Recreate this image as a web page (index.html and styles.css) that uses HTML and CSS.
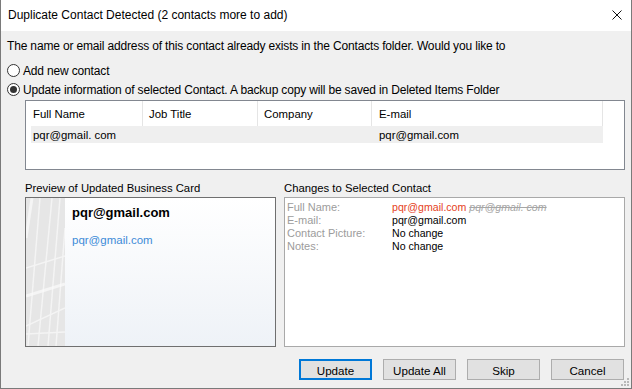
FILE: index.html
```html
<!DOCTYPE html>
<html>
<head>
<meta charset="utf-8">
<link rel="stylesheet" href="styles.css">
</head>
<body>
<div class="titlebar">
  <span class="title">Duplicate Contact Detected (2 contacts more to add)</span>
  <svg class="close" width="10" height="10" viewBox="0 0 10 10"><path d="M0.5 0.5 L9.5 9.5 M9.5 0.5 L0.5 9.5" stroke="#111" stroke-width="1" fill="none"/></svg>
</div>
<div class="content">
  <div class="desc">The name or email address of this contact already exists in the Contacts folder. Would you like to</div>
  <div class="radios">
    <div class="radio-row"><span class="radio"></span><span>Add new contact</span></div>
    <div class="radio-row"><span class="radio checked"></span><span>Update information of selected Contact. A backup copy will be saved in Deleted Items Folder</span></div>
  </div>
  <div class="listbox">
    <div class="lv-head">
      <div class="lv-col c1">Full Name</div>
      <div class="lv-col c2">Job Title</div>
      <div class="lv-col c3">Company</div>
      <div class="lv-col c4">E-mail</div>
    </div>
    <div class="lv-row">
      <div class="lv-cell first">pqr@gmail. com</div>
      <div class="lv-cell">pqr@gmail.com</div>
    </div>
  </div>
  <div class="lower">
    <div class="card-col">
      <div class="group-label">Preview of Updated Business Card</div>
      <div class="card">
        <div class="strip">
          <svg width="39" height="148" viewBox="0 0 39 148">
            <g stroke="#f6f6f6" stroke-width="1.5" fill="none" opacity="0.9">
              <path d="M14 0 L2 148"/>
              <path d="M26 0 L12 148"/>
              <path d="M34 0 L22 148"/>
              <path d="M39 30 L30 148"/>
              <path d="M0 70 L39 58"/>
              <path d="M0 128 L39 110"/>
              <path d="M0 136 L39 134"/>
            </g>
            <g stroke="#fbfbfb" stroke-width="3" fill="none" opacity="0.7">
              <path d="M0 98 L39 86"/>
              <path d="M6 0 L0 40"/>
            </g>
          </svg>
        </div>
        <div class="card-body">
          <div class="card-name">pqr@gmail.com</div>
          <div class="card-email">pqr@gmail.com</div>
        </div>
      </div>
    </div>
    <div class="changes-col">
      <div class="group-label">Changes to Selected Contact</div>
      <div class="changes">
        <div class="ch-label">Full Name:</div><div class="ch-value"><span class="new">pqr@gmail.com</span> <span class="old">pqr@gmail. com</span></div>
        <div class="ch-label">E-mail:</div><div class="ch-value">pqr@gmail.com</div>
        <div class="ch-label">Contact Picture:</div><div class="ch-value">No change</div>
        <div class="ch-label">Notes:</div><div class="ch-value">No change</div>
      </div>
    </div>
  </div>
  <div class="buttons">
    <button class="btn default">Update</button>
    <button class="btn">Update All</button>
    <button class="btn">Skip</button>
    <button class="btn">Cancel</button>
  </div>
</div>
<svg class="grip" width="10" height="10" viewBox="0 0 10 10">
  <g fill="#b8b8b8">
    <rect x="8" y="2" width="2" height="2"/>
    <rect x="5" y="5" width="2" height="2"/><rect x="8" y="5" width="2" height="2"/>
    <rect x="2" y="8" width="2" height="2"/><rect x="5" y="8" width="2" height="2"/><rect x="8" y="8" width="2" height="2"/>
  </g>
</svg>
</body>
</html>
```

FILE: styles.css
```css
html, body {
  margin: 0;
  padding: 0;
}
body {
  width: 632px;
  height: 389px;
  box-sizing: border-box;
  border: 1px solid #7a7a7a;
  border-top: none;
  display: flex;
  flex-direction: column;
  font-family: "Liberation Sans", Arial, sans-serif;
  font-size: 12px;
  color: #000;
  overflow: hidden;
  position: relative;
  background: #f0f0f0;
}
.titlebar {
  height: 31px;
  flex: none;
  background: #fff;
  display: flex;
  align-items: center;
  padding-left: 7px;
  padding-bottom: 1px;
  box-sizing: border-box;
}
.title {
  font-size: 12px;
}
.close {
  margin-left: auto;
  margin-right: 9px;
}
.content {
  flex: 1;
  display: flex;
  flex-direction: column;
  padding: 7px 6px 0 6px;
}
.desc {
  line-height: 15px;
  height: 15px;
  padding-top: 1px;
  white-space: nowrap;
  letter-spacing: -0.16px;
}
.radios {
  margin-top: 7px;
  letter-spacing: -0.16px;
}
.radio-row {
  height: 19px;
  display: flex;
  align-items: center;
  white-space: nowrap;
}
.radio {
  width: 13px;
  height: 13px;
  box-sizing: border-box;
  border: 1px solid #333;
  border-radius: 50%;
  background: #fff;
  margin-right: 3px;
  display: flex;
  align-items: center;
  justify-content: center;
  flex: none;
}
.radio.checked::after {
  content: "";
  width: 7px;
  height: 7px;
  border-radius: 50%;
  background: #333;
}
.listbox {
  margin: 1px 0 0 18px;
  width: 600px;
  height: 70px;
  box-sizing: border-box;
  border: 1px solid #828790;
  background: #fff;
  font-size: 11.4px;
}
.lv-head {
  display: flex;
  height: 25px;
}
.lv-col {
  box-sizing: border-box;
  border-right: 1px solid #e5e5e5;
  line-height: 15px;
  padding: 6px 0 0 6px;
  white-space: nowrap;
}
.lv-col.c1 { width: 117px; padding-left: 7px; }
.lv-col.c2 { width: 115px; }
.lv-col.c3 { width: 114px; }
.lv-col.c4 { width: 231px; padding-left: 7px; }
.lv-row {
  margin-left: 5px;
  width: 572px;
  height: 17px;
  box-sizing: border-box;
  padding-top: 2px;
  background: #efefef;
  display: grid;
  grid-template-columns: 348px 1fr;
  line-height: 15px;
}
.lv-cell.first {
  padding-left: 2px;
}
.lower {
  display: flex;
  margin: 10px 0 0 18px;
  gap: 8px;
}
.card-col {
  width: 251px;
}
.changes-col {
  width: 341px;
}
.group-label {
  line-height: 15px;
  height: 15px;
  padding-top: 1px;
  box-sizing: border-box;
  white-space: nowrap;
  font-size: 11.3px;
}
.card {
  margin-top: 2px;
  height: 150px;
  box-sizing: border-box;
  border: 1px solid #6f6f6f;
  display: flex;
  background: #fff;
}
.strip {
  width: 39px;
  flex: none;
  background: #e6e6e6;
  overflow: hidden;
}
.strip svg {
  display: block;
}
.card-body {
  flex: 1;
  background: linear-gradient(#ffffff, #eef2f7);
  padding: 7px 0 0 7px;
}
.card-name {
  font-weight: bold;
  font-size: 13px;
  line-height: 16px;
}
.card-email {
  margin-top: 12px;
  font-size: 11.5px;
  line-height: 15px;
  color: #3d8bd8;
}
.changes {
  margin-top: 2px;
  height: 150px;
  box-sizing: border-box;
  border: 1px solid #a9a9a9;
  background: #fff;
  padding: 3px 0 0 2px;
  display: grid;
  grid-template-columns: 105px 1fr;
  grid-auto-rows: 13px;
  align-content: start;
  font-size: 11px;
  line-height: 13px;
}
.ch-label {
  color: #9c9c9c;
  white-space: nowrap;
}
.ch-value {
  white-space: nowrap;
  font-size: 10.6px;
}
.new {
  color: #e5421d;
}
.old {
  color: #a6a6a6;
  font-style: italic;
  text-decoration: line-through;
}
.buttons {
  display: flex;
  justify-content: flex-end;
  gap: 11px;
  margin: 12px 1px 0 0;
}
.btn {
  width: 73px;
  height: 21px;
  box-sizing: border-box;
  border: 1px solid #adadad;
  background: #e1e1e1;
  font-family: "Liberation Sans", Arial, sans-serif;
  font-size: 11.6px;
  color: #000;
  padding: 1px 0 0 0;
  margin: 0;
  line-height: 17px;
}
.btn.default {
  border: 2px solid #0078d7;
  line-height: 15px;
}
.grip {
  position: absolute;
  right: 2px;
  bottom: 2px;
}
```
